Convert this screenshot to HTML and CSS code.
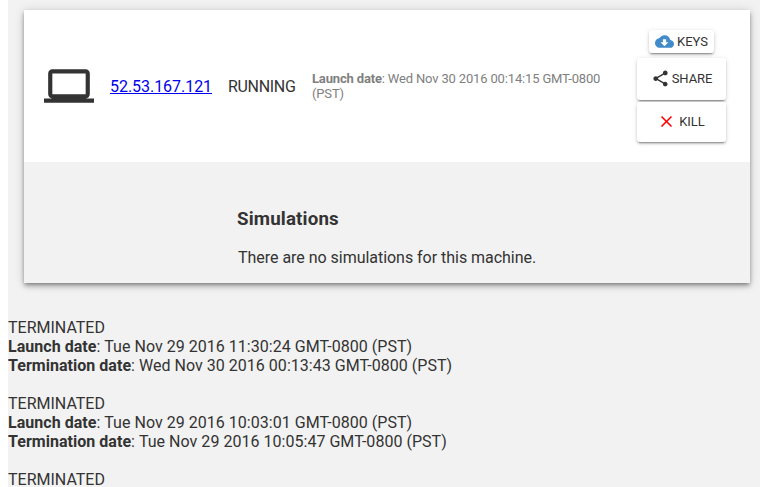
FILE: index.html
```
<!DOCTYPE html>
<html lang="en">
<head>
<meta charset="utf-8">
<title>Machines</title>
<link rel="stylesheet" href="styles.css">
</head>
<body>
<main class="page">
  <section class="card">
    <header class="machine">
      <svg class="laptop" viewBox="0 0 24 24"><path d="M20 18c1.1 0 1.99-.9 1.99-2L22 6c0-1.1-.9-2-2-2H4c-1.1 0-2 .9-2 2v10c0 1.1.9 2 2 2H0v2h24v-2h-4zM4 6h16v10H4V6z"/></svg>
      <a class="ip" href="#">52.53.167.121</a>
      <span class="status">RUNNING</span>
      <div class="launch"><b>Launch date</b>: Wed Nov 30 2016 00:14:15 GMT-0800 (PST)</div>
      <div class="actions">
        <button class="btn btn-keys"><svg class="icon-keys" viewBox="0 0 24 24"><path d="M19.35 10.04C18.67 6.59 15.64 4 12 4 9.11 4 6.6 5.64 5.35 8.04 2.34 8.36 0 10.91 0 14c0 3.31 2.69 6 6 6h13c2.76 0 5-2.24 5-5 0-2.64-2.05-4.78-4.65-4.96zM17 13l-5 5-5-5h3V9h4v4h3z"/></svg>KEYS</button>
        <button class="btn btn-share"><svg class="icon-share" viewBox="0 0 24 24"><path d="M18 16.08c-.76 0-1.44.3-1.96.77L8.91 12.7c.05-.23.09-.46.09-.7s-.04-.47-.09-.7l7.05-4.11c.54.5 1.25.81 2.04.81 1.66 0 3-1.34 3-3s-1.34-3-3-3-3 1.34-3 3c0 .24.04.47.09.7L8.04 9.81C7.5 9.31 6.79 9 6 9c-1.66 0-3 1.34-3 3s1.34 3 3 3c.79 0 1.5-.31 2.04-.81l7.12 4.16c-.05.21-.08.43-.08.65 0 1.61 1.31 2.92 2.92 2.92 1.61 0 2.92-1.31 2.92-2.92s-1.31-2.92-2.92-2.92z"/></svg>SHARE</button>
        <button class="btn btn-kill"><svg class="icon-kill" viewBox="0 0 24 24"><path d="M19 6.41L17.59 5 12 10.59 6.41 5 5 6.41 10.59 12 5 17.59 6.41 19 12 13.41 17.59 19 19 17.59 13.41 12z"/></svg>KILL</button>
      </div>
    </header>
    <div class="simulations">
      <h3>Simulations</h3>
      <p>There are no simulations for this machine.</p>
    </div>
  </section>
  <section class="history">
    <div class="entry">TERMINATED<br><b>Launch date</b>: <span class="date">Tue Nov 29 2016 11:30:24 GMT-0800 (PST)</span><br><b>Termination date</b>: <span class="date">Wed Nov 30 2016 00:13:43 GMT-0800 (PST)</span></div>
    <div class="entry">TERMINATED<br><b>Launch date</b>: <span class="date">Tue Nov 29 2016 10:03:01 GMT-0800 (PST)</span><br><b>Termination date</b>: <span class="date">Tue Nov 29 2016 10:05:47 GMT-0800 (PST)</span></div>
    <div class="entry">TERMINATED</div>
  </section>
</main>
</body>
</html>
```
FILE: styles.css
```
* { box-sizing: border-box; }
html { background: #fff; }
body {
  margin: 0 0 0 8px;
  height: 487px;
  overflow: hidden;
  background: #fff;
  color: #333;
  font: 16px/19px Roboto, sans-serif;
}
.page {
  height: 487px;
  overflow: hidden;
  padding-top: 10px;
  background: #f2f2f2;
}
.card {
  width: 726px;
  height: 273px;
  margin-left: 16px;
  background: #f2f2f2;
  box-shadow: 0 4px 5px 0 rgba(0, 0, 0, .14), 0 1px 10px 0 rgba(0, 0, 0, .16), 0 2px 4px -1px rgba(0, 0, 0, .4);
}
.machine {
  display: flex;
  align-items: center;
  height: 152px;
  padding: 0 24px 0 20px;
  background: #fff;
}
.laptop { flex: none; width: 50px; height: 50px; fill: #333; }
.ip { width: 102px; margin-left: 16px; color: #00e; letter-spacing: -.04px; }
.status { width: 68px; margin-left: 16px; letter-spacing: -.32px; }
.launch {
  width: 300px;
  margin-left: 16px;
  color: #808080;
  font-size: 13px;
  line-height: 15px;
  letter-spacing: -.16px;
}
.actions {
  display: flex;
  flex-direction: column;
  align-items: center;
  width: 89px;
  margin-left: auto;
}
.btn {
  display: flex;
  align-items: center;
  justify-content: center;
  width: 89px;
  height: 42px;
  padding: 0;
  border: 0;
  border-radius: 3px;
  background: #fff;
  color: #333;
  font: 13px/15px Roboto, sans-serif;
  box-shadow: 0 2px 2px 0 rgba(0, 0, 0, .16), 0 1px 5px 0 rgba(0, 0, 0, .14), 0 3px 1px -2px rgba(0, 0, 0, .24);
}
.btn svg { flex: none; }
.btn-keys { width: 65px; height: 23px; margin-bottom: 5px; }
.btn-share { padding-bottom: 1px; letter-spacing: -.1px; }
.btn-kill { height: 40px; margin-top: 2px; padding: 0 1px 1px 0; }
.icon-keys { width: 19px; height: 19px; margin-right: 3px; fill: #428bca; }
.icon-share { width: 19px; height: 19px; margin-right: 2px; fill: #333; }
.icon-kill { width: 19px; height: 19px; margin-right: 3px; fill: #f00; }
.simulations { padding: 47px 0 0 213px; }
h3 { margin: 0 0 18px; font-size: 18.72px; line-height: 21px; letter-spacing: .16px; }
p { margin: 0 0 0 1px; letter-spacing: -.03px; }
.history { padding-top: 35px; }
.entry { margin-bottom: 19px; }
.entry b { letter-spacing: .03px; }
.date { letter-spacing: .03px; }
```
